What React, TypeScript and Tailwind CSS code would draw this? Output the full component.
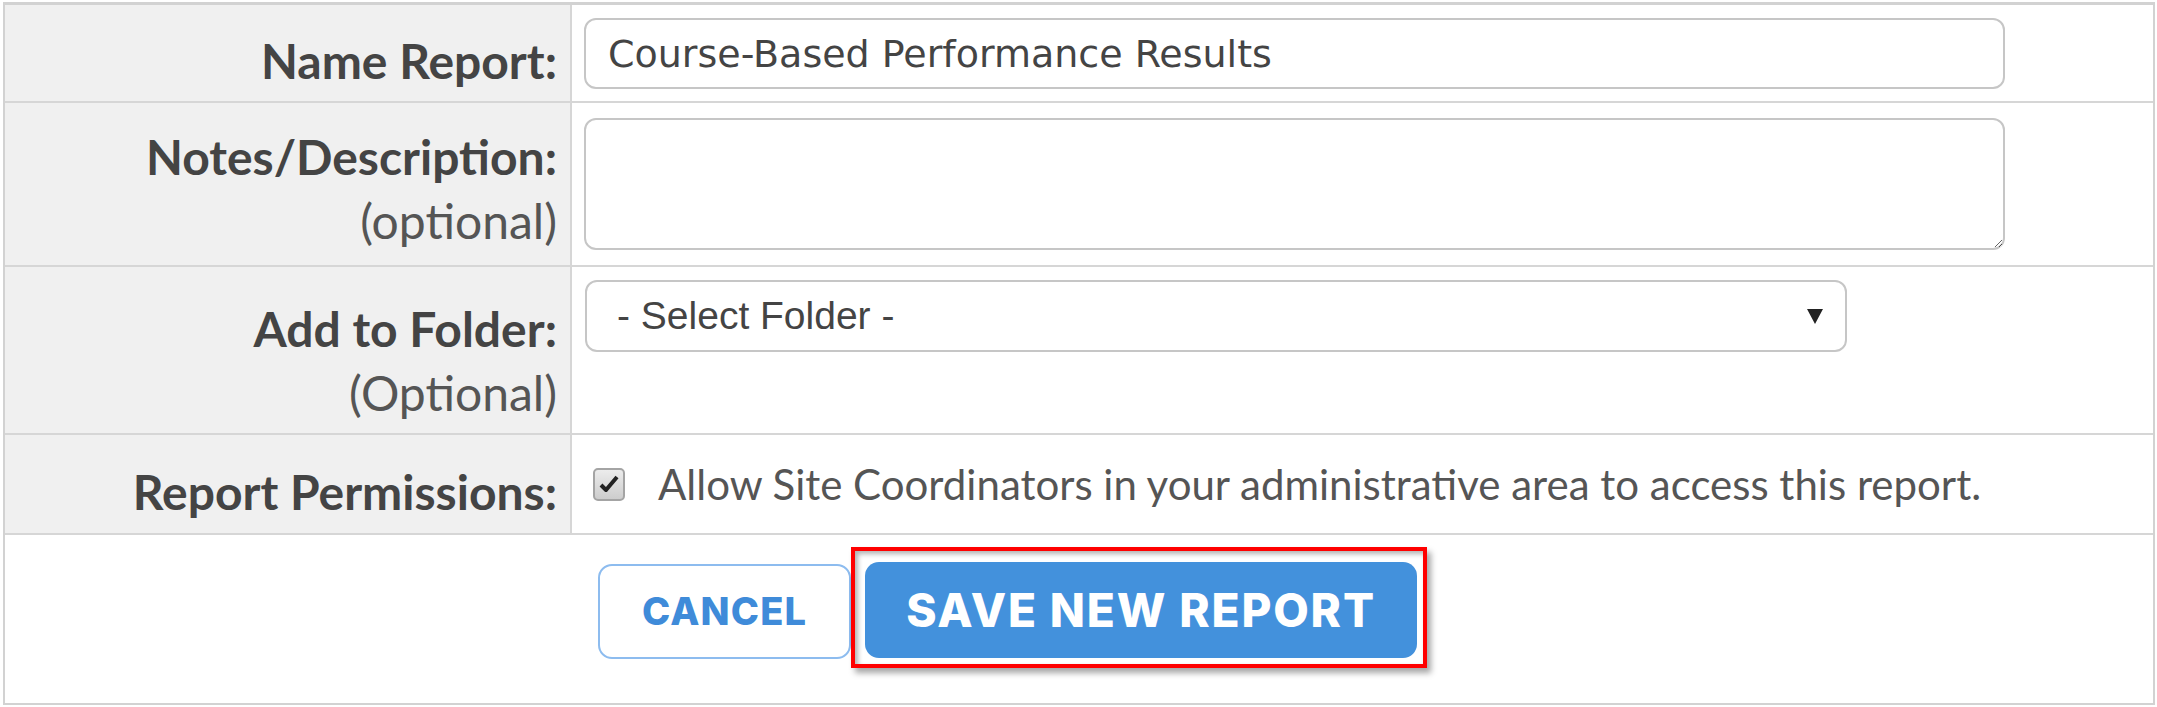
import { ReactNode } from "react";

interface RowProps {
	height: string;
	labelPad: string;
	label: ReactNode;
	children: ReactNode;
}

function Row({ height, labelPad, label, children }: RowProps) {
	return (
		<div className={`flex border-b-2 border-[#d6d6d6] ${height}`}>
			<div
				className={`w-[567px] shrink-0 border-r-2 border-[#d6d6d6] bg-[#f0f0f0] pr-[13px] text-right font-['Lato',sans-serif] text-[48px] leading-[64px] text-[#444] ${labelPad}`}
			>
				{label}
			</div>
			<div className="flex-1">{children}</div>
		</div>
	);
}

function Optional({ children }: { children: ReactNode }) {
	return <div className="font-normal text-[#555]">{children}</div>;
}

export default function App() {
	return (
		<div className="h-[707px] w-[2157px] bg-white pl-[3px] pt-[2px]">
			<div className="flex h-[703px] w-[2152px] flex-col border-2 border-t-[3px] border-[#d2d2d2]">
				<Row
					height="h-[98px]"
					labelPad="pt-[24px]"
					label={<div className="font-bold">Name Report:</div>}
				>
					<div className="pl-[12px] pt-[13px]">
						<input
							readOnly
							value="Course-Based Performance Results"
							className="h-[71px] w-[1421px] rounded-[12px] border-2 border-[#c6c6c6] bg-white pl-[22px] font-['DejaVu_Sans',sans-serif] text-[38px] text-[#444] outline-none"
						/>
					</div>
				</Row>
				<Row
					height="h-[164px]"
					labelPad="pt-[22px]"
					label={
						<>
							<div className="font-bold">Notes/Description:</div>
							<Optional>(optional)</Optional>
						</>
					}
				>
					<div className="pl-[12px] pt-[15px]">
						<textarea className="block h-[132px] w-[1421px] rounded-[12px] border-2 border-[#c6c6c6] bg-white outline-none" />
					</div>
				</Row>
				<Row
					height="h-[168px]"
					labelPad="pt-[30px]"
					label={
						<>
							<div className="font-bold">Add to Folder:</div>
							<Optional>(Optional)</Optional>
						</>
					}
				>
					<div className="pl-[13px] pt-[13px]">
						<div className="flex h-[72px] w-[1262px] items-center justify-between rounded-[12px] border-2 border-[#c6c6c6] bg-white pl-[30px] pr-[22px] font-['Liberation_Sans',Arial,sans-serif] text-[39px] text-[#444]">
							<span>- Select Folder -</span>
							<svg width="16" height="15" viewBox="0 0 16 15">
								<path d="M0 0 H16 L8 15 Z" fill="#222" />
							</svg>
						</div>
					</div>
				</Row>
				<Row
					height="h-[100px]"
					labelPad="pt-[25px]"
					label={<div className="font-bold">Report Permissions:</div>}
				>
					<div className="flex h-full items-center pl-[21px]">
						<div className="flex h-[33px] w-[32px] items-center justify-center rounded-[5px] border-2 border-[#a4a4a4] bg-gradient-to-b from-[#ececec] to-[#cdcdcd]">
							<svg width="20" height="18" viewBox="0 0 20 18">
								<path
									d="M2 10 L7 15 L18 2"
									fill="none"
									stroke="#222"
									strokeWidth="4"
									strokeLinejoin="round"
								/>
							</svg>
						</div>
						<span className="pl-[33px] font-['Lato',sans-serif] text-[42px] text-[#555]">
							Allow Site Coordinators in your administrative area to access this
							report.
						</span>
					</div>
				</Row>
				<div className="flex flex-1 items-start pl-[593px]">
					<button className="mt-[29px] h-[95px] w-[253px] rounded-[14px] border-2 border-[#8dbcef] bg-white font-['Inter',sans-serif] text-[38px] font-extrabold tracking-[0.03em] text-[#3f8bd9]">
						CANCEL
					</button>
					<div className="mt-[12px] border-4 border-[#f00] bg-white pb-[6px] pl-[10px] pr-[6px] pt-[11px] shadow-[4px_5px_6px_rgba(0,0,0,0.35),inset_3px_3px_5px_rgba(0,0,0,0.3)]">
						<button className="h-[96px] w-[552px] rounded-[14px] bg-[#4391dc] font-['Inter',sans-serif] text-[46px] font-extrabold tracking-[0.04em] text-white">
							SAVE NEW REPORT
						</button>
					</div>
				</div>
			</div>
		</div>
	);
}
